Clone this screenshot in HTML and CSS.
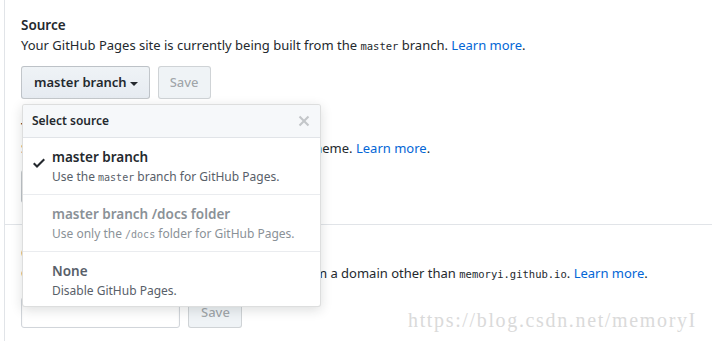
FILE: index.html
```html
<!DOCTYPE html>
<html lang="en">
<head>
<meta charset="utf-8">
<title>GitHub Pages</title>
<link rel="stylesheet" href="styles.css">
</head>
<body>

<div class="settings">

  <!-- SOURCE + THEME -->
  <section class="block">
    <h3 class="block-title">Source</h3>
    <p class="note">Your GitHub Pages site is currently being built from the <code>master</code> branch. <a href="#">Learn more</a>.</p>

    <div class="source-form">
      <div class="select-menu">
        <button class="btn">master branch <span class="caret"></span></button>

        <div class="menu">
          <div class="menu-header">
            <span class="menu-title">Select source</span>
            <svg class="menu-close" width="12" height="16" viewBox="0 0 12 16"><path d="M7.48 8l3.75 3.75-1.48 1.48L6 9.48l-3.75 3.75-1.48-1.48L4.52 8 .77 4.25l1.48-1.48L6 6.520l3.75-3.75 1.48 1.48L7.48 8z"/></svg>
          </div>
          <div class="menu-item selected">
            <svg class="check" width="12" height="16" viewBox="0 0 12 16"><path d="M12 5l-8 8-4-4 1.5-1.5L4 10l6.5-6.5L12 5z"/></svg>
            <div>
              <div class="item-title">master branch</div>
              <div class="item-desc">Use the <code>master</code> branch for GitHub Pages.</div>
            </div>
          </div>
          <div class="menu-item disabled">
            <span class="check"></span>
            <div>
              <div class="item-title">master branch /docs folder</div>
              <div class="item-desc">Use only the <code>/docs</code> folder for GitHub Pages.</div>
            </div>
          </div>
          <div class="menu-item last">
            <span class="check"></span>
            <div>
              <div class="item-title">None</div>
              <div class="item-desc">Disable GitHub Pages.</div>
            </div>
          </div>
        </div>
      </div>
      <button class="btn" disabled>Save</button>
    </div>

    <h3 class="block-title theme-title">Theme chooser</h3>
    <p class="note">Select a theme to publish your site with a Jekyll theme. <a href="#">Learn more</a>.</p>
    <button class="btn theme-btn">Choose a theme</button>
  </section>

  <!-- CUSTOM DOMAIN -->
  <section class="block domain">
    <h3 class="block-title">Custom domain</h3>
    <p class="note">Custom domains allow you to serve your site from a domain other than <code>memoryi.github.io</code>. <a href="#">Learn more</a>.</p>
    <div class="domain-form">
      <input class="input" type="text">
      <button class="btn" disabled>Save</button>
    </div>
  </section>

  <div class="watermark">https://blog.csdn.net/memoryI</div>
</div>

</body>
</html>
```

FILE: styles.css
```css
/* --------- GENEL --------- */
*{box-sizing:border-box;margin:0;padding:0}
body{
  font-family:'Noto Sans',sans-serif;
  font-size:13px;
  line-height:20px;
  color:#24292e;
  background:#fff;
  height:341px;
  overflow:hidden;
}
a{color:#0366d6;text-decoration:none}
code{font-family:'DejaVu Sans Mono',monospace;font-size:10.5px}

.settings{
  position:relative;
  margin-left:4px;
  border-left:1px solid #e1e4e8;
  min-height:341px;
}

/* --------- BLOKLAR --------- */
.block{
  padding:15px 0 21px 16px;
  border-bottom:1px solid #e1e4e8;
}
.block-title{font-size:13.5px;font-weight:600;line-height:20px}
.theme-title{margin-top:19px}
.note{line-height:20px}
.domain{padding-top:18px}

/* --------- BUTONLAR --------- */
.btn{
  font-family:inherit;
  font-size:13px;
  font-weight:600;
  line-height:19px;
  padding:6px 11px 6px 12px;
  color:#24292e;
  background:linear-gradient(#eff3f6,#e6ebf1);
  border:1px solid rgba(27,31,35,.2);
  border-radius:3px;
  display:inline-flex;
  align-items:center;
  gap:3px;
}
.btn[disabled]{
  color:rgba(36,41,46,.4);
  background:#eff3f6;
  border-color:rgba(27,31,35,.15);
  font-weight:500;
}
.caret{
  display:inline-block;
  border:4px solid transparent;
  border-top-color:#24292e;
  border-bottom:0;
  margin-top:2px;
}
.source-form{display:flex;gap:8px;margin-top:10px;position:relative;z-index:5}
.source-form > .btn{padding:6px 11px}
.select-menu{position:relative}
.theme-btn{margin-top:12px}

/* --------- MENU --------- */
.menu{
  position:absolute;
  top:38px;
  left:1px;
  width:299px;
  background:#fff;
  border:1px solid rgba(27,31,35,.15);
  border-radius:3px;
  box-shadow:0 3px 12px rgba(27,31,35,.15);
  overflow:hidden;
}
.menu-header{
  height:33px;
  display:flex;
  align-items:center;
  justify-content:space-between;
  padding:0 10px 0 9px;
  background:#f6f8fa;
  border-bottom:1px solid #e1e4e8;
}
.menu-title{font-size:12px;font-weight:600}
.menu-close{fill:#c3c6c9}

.menu-item{
  display:flex;
  padding:9px 10px 7px 10px;
  border-bottom:1px solid #eaecef;
}
.menu-item.last{border-bottom:0;padding-bottom:6px}
.check{width:12px;height:16px;flex:none;margin:8px 7px 0 0;fill:#24292e}
.item-title{font-size:13.5px;font-weight:600;line-height:20px}
.item-desc{font-size:12px;line-height:19px;color:#586069}
.item-desc code{font-size:10px}
.disabled .item-title,.disabled .item-desc{color:#8a9197}
.last .item-title{color:#586069}

/* --------- DOMAIN --------- */
.domain-form{display:flex;gap:8px;margin-top:13px}
.input{
  width:159px;
  height:31px;
  border:1px solid #d1d5da;
  border-radius:3px;
  box-shadow:inset 0 1px 2px rgba(27,31,35,.075);
}
.domain-form .btn{height:31px}

.watermark{
  position:absolute;
  left:403px;
  top:310px;
  font-family:'Liberation Serif',serif;
  font-size:20px;
  letter-spacing:1.65px;
  color:#dadada;
  white-space:nowrap;
}
```
